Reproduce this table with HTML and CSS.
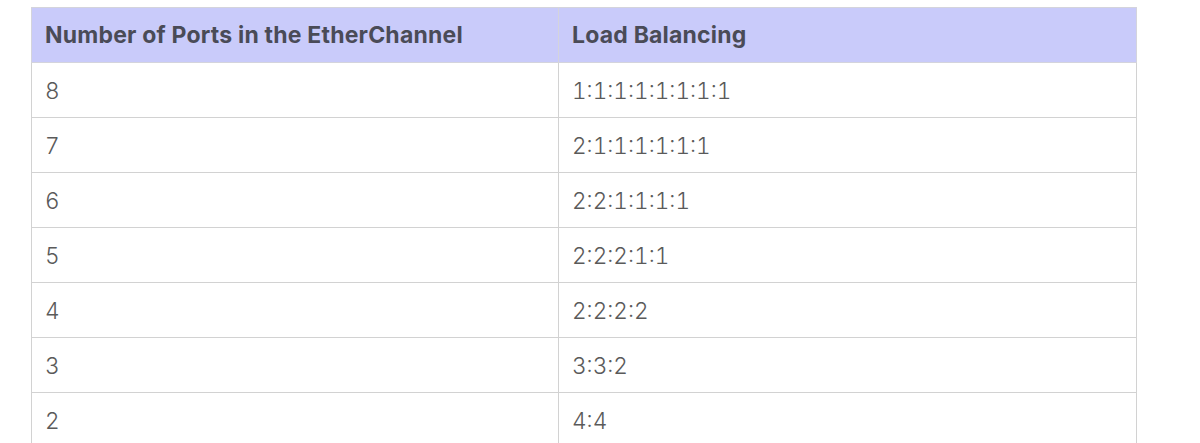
FILE: index.html
```html
<!DOCTYPE html>
<html>
<head>
<meta charset="utf-8">
<link rel="stylesheet" href="styles.css">
</head>
<body>
<div class="wrap">
<table class="lb-table">
  <thead>
    <tr><th class="c1">Number of Ports in the EtherChannel</th><th>Load Balancing</th></tr>
  </thead>
  <tbody>
    <tr><td>8</td><td>1:1:1:1:1:1:1:1</td></tr>
    <tr><td>7</td><td>2:1:1:1:1:1:1</td></tr>
    <tr><td>6</td><td>2:2:1:1:1:1</td></tr>
    <tr><td>5</td><td>2:2:2:1:1</td></tr>
    <tr><td>4</td><td>2:2:2:2</td></tr>
    <tr><td>3</td><td>3:3:2</td></tr>
    <tr><td>2</td><td>4:4</td></tr>
  </tbody>
</table>
</div>
</body>
</html>
```
FILE: styles.css
```css
html, body {
  margin: 0;
  padding: 0;
  background: #ffffff;
}
.wrap {
  padding: 7px 0 0 31px;
}
.lb-table {
  border-collapse: collapse;
  width: 1106px;
  font-family: Inter, "Liberation Sans", sans-serif;
}
.lb-table th {
  background: #c9cbfa;
  color: #4a4b57;
  font-weight: 700;
  font-size: 23px;
  letter-spacing: 0.2px;
  text-align: left;
  height: 55px;
  padding: 0 13px;
  border: 1px solid #d4d4dc;
  box-sizing: border-box;
}
.lb-table th.c1 {
  width: 527px;
}
.lb-table td {
  color: #5a5a5a;
  font-weight: 300;
  font-size: 22.6px;
  font-feature-settings: "tnum" 1;
  height: 55px;
  padding: 0 13px;
  border: 1px solid #d2d2d2;
  box-sizing: border-box;
}
```
